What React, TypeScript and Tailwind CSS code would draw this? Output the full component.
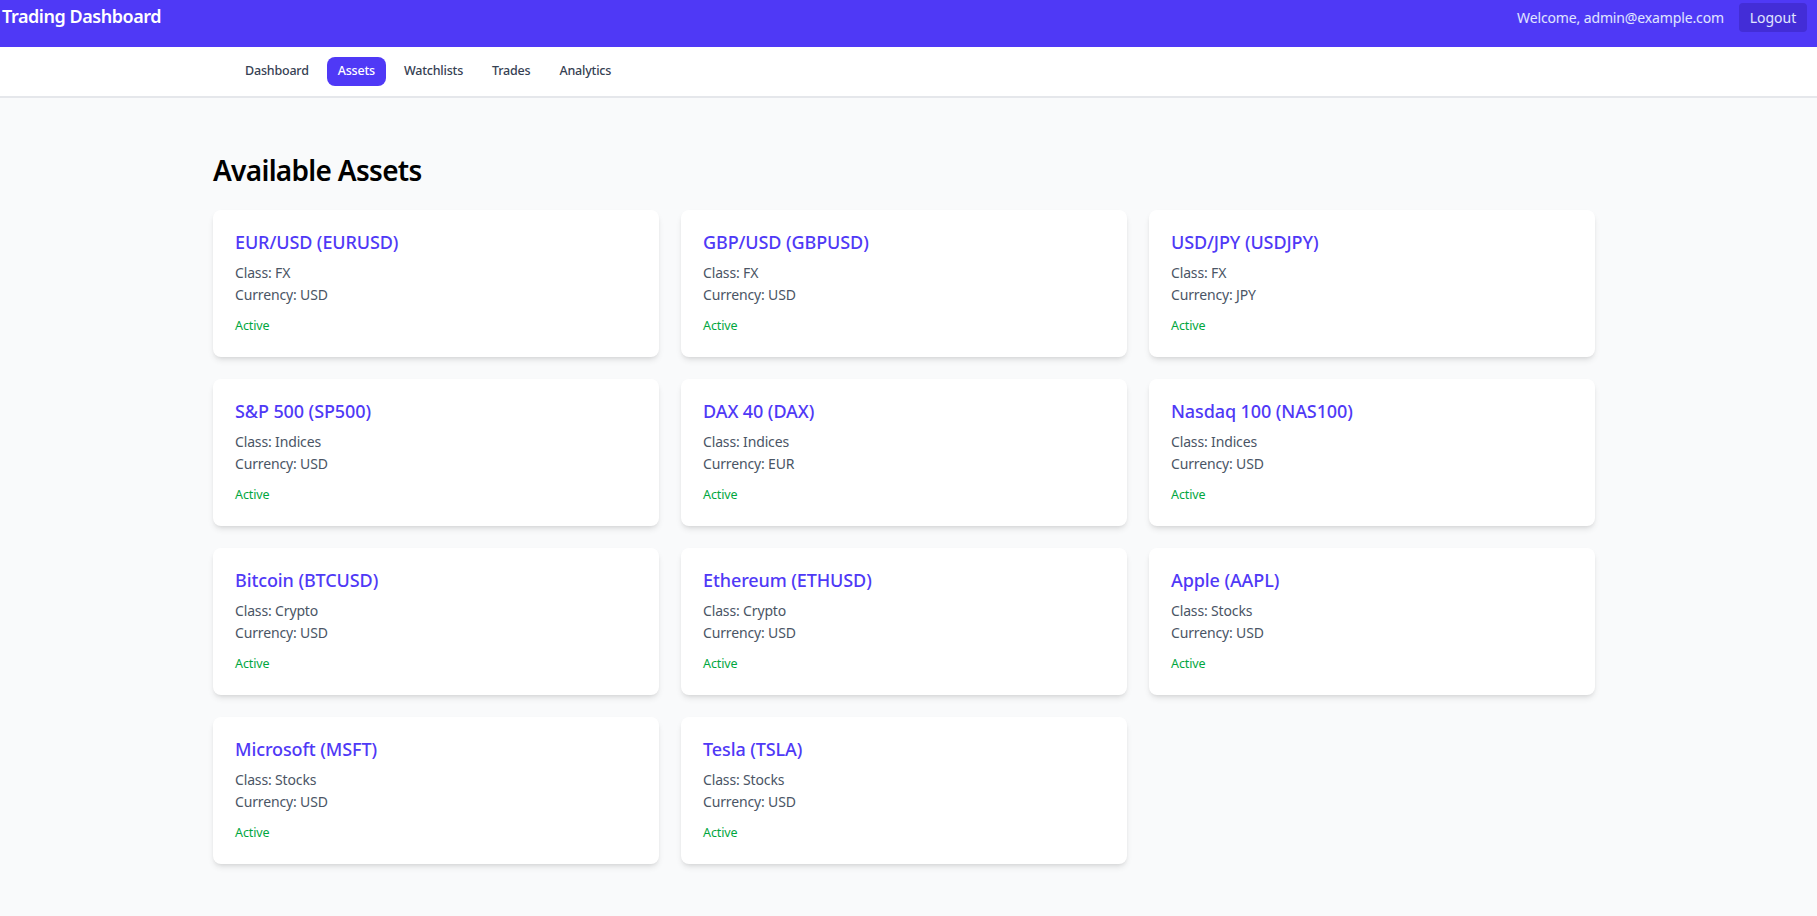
import React from 'react';

type Asset = { name: string; symbol: string; assetClass: string; currency: string };

const assets: Asset[] = [
    { name: 'EUR/USD', symbol: 'EURUSD', assetClass: 'FX', currency: 'USD' },
    { name: 'GBP/USD', symbol: 'GBPUSD', assetClass: 'FX', currency: 'USD' },
    { name: 'USD/JPY', symbol: 'USDJPY', assetClass: 'FX', currency: 'JPY' },
    { name: 'S&P 500', symbol: 'SP500', assetClass: 'Indices', currency: 'USD' },
    { name: 'DAX 40', symbol: 'DAX', assetClass: 'Indices', currency: 'EUR' },
    { name: 'Nasdaq 100', symbol: 'NAS100', assetClass: 'Indices', currency: 'USD' },
    { name: 'Bitcoin', symbol: 'BTCUSD', assetClass: 'Crypto', currency: 'USD' },
    { name: 'Ethereum', symbol: 'ETHUSD', assetClass: 'Crypto', currency: 'USD' },
    { name: 'Apple', symbol: 'AAPL', assetClass: 'Stocks', currency: 'USD' },
    { name: 'Microsoft', symbol: 'MSFT', assetClass: 'Stocks', currency: 'USD' },
    { name: 'Tesla', symbol: 'TSLA', assetClass: 'Stocks', currency: 'USD' },
];

const navItems = ['Dashboard', 'Assets', 'Watchlists', 'Trades', 'Analytics'];

export default function App() {
    return (
        <div className="min-h-screen bg-gray-50 font-['Noto_Sans',sans-serif]">
            {/* Header */}
            <header className="h-[47px] bg-indigo-600 text-white">
                <div className="flex items-start justify-between pl-[2px] pr-[10px] pt-[3px]">
                    <h1 className="text-[18px] leading-[26px] font-semibold tracking-[-0.45px]">Trading Dashboard</h1>
                    <div className="flex items-center gap-[15px]">
                        <span className="text-[14px] tracking-[-0.13px] text-indigo-100">Welcome, admin@example.com</span>
                        <button className="h-[29px] w-[68px] rounded bg-indigo-700 text-[14px] text-indigo-100">Logout</button>
                    </div>
                </div>
            </header>

            {/* Nav */}
            <nav className="h-[51px] border-b-2 border-gray-200 bg-white">
                <div className="flex items-center gap-[7px] pl-[234px] pt-[10px]">
                    {navItems.map((item) => (
                        <a
                            key={item}
                            className={
                                item === 'Assets'
                                    ? 'rounded-lg bg-indigo-600 px-[11px] py-[5px] text-[12.5px] font-medium tracking-[-0.2px] text-white'
                                    : 'rounded-lg px-[11px] py-[5px] text-[12.5px] font-medium tracking-[-0.2px] text-gray-700'
                            }
                        >
                            {item}
                        </a>
                    ))}
                </div>
            </nav>

            {/* Main */}
            <main className="pl-[213px] pr-[222px] pt-[51px]">
                <h2 className="mb-[19px] text-[28px] leading-[42px] font-semibold tracking-[-0.7px] text-black">Available Assets</h2>
                <div className="grid grid-cols-3 gap-[22px]">
                    {assets.map((asset) => (
                        <div key={asset.symbol} className="h-[147px] rounded-lg bg-white px-[22px] pt-[21px] shadow-md">
                            <h3 className="text-[18px] leading-[22px] font-medium tracking-[-0.1px] text-indigo-600">
                                {asset.name} ({asset.symbol})
                            </h3>
                            <p className="mt-[9px] text-[14px] leading-[22px] tracking-[-0.15px] text-gray-600">Class: {asset.assetClass}</p>
                            <p className="text-[14px] leading-[22px] tracking-[-0.15px] text-gray-600">Currency: {asset.currency}</p>
                            <p className="mt-[10px] text-[12.5px] leading-[20px] tracking-[-0.1px] text-green-600">Active</p>
                        </div>
                    ))}
                </div>
            </main>
        </div>
    );
}
